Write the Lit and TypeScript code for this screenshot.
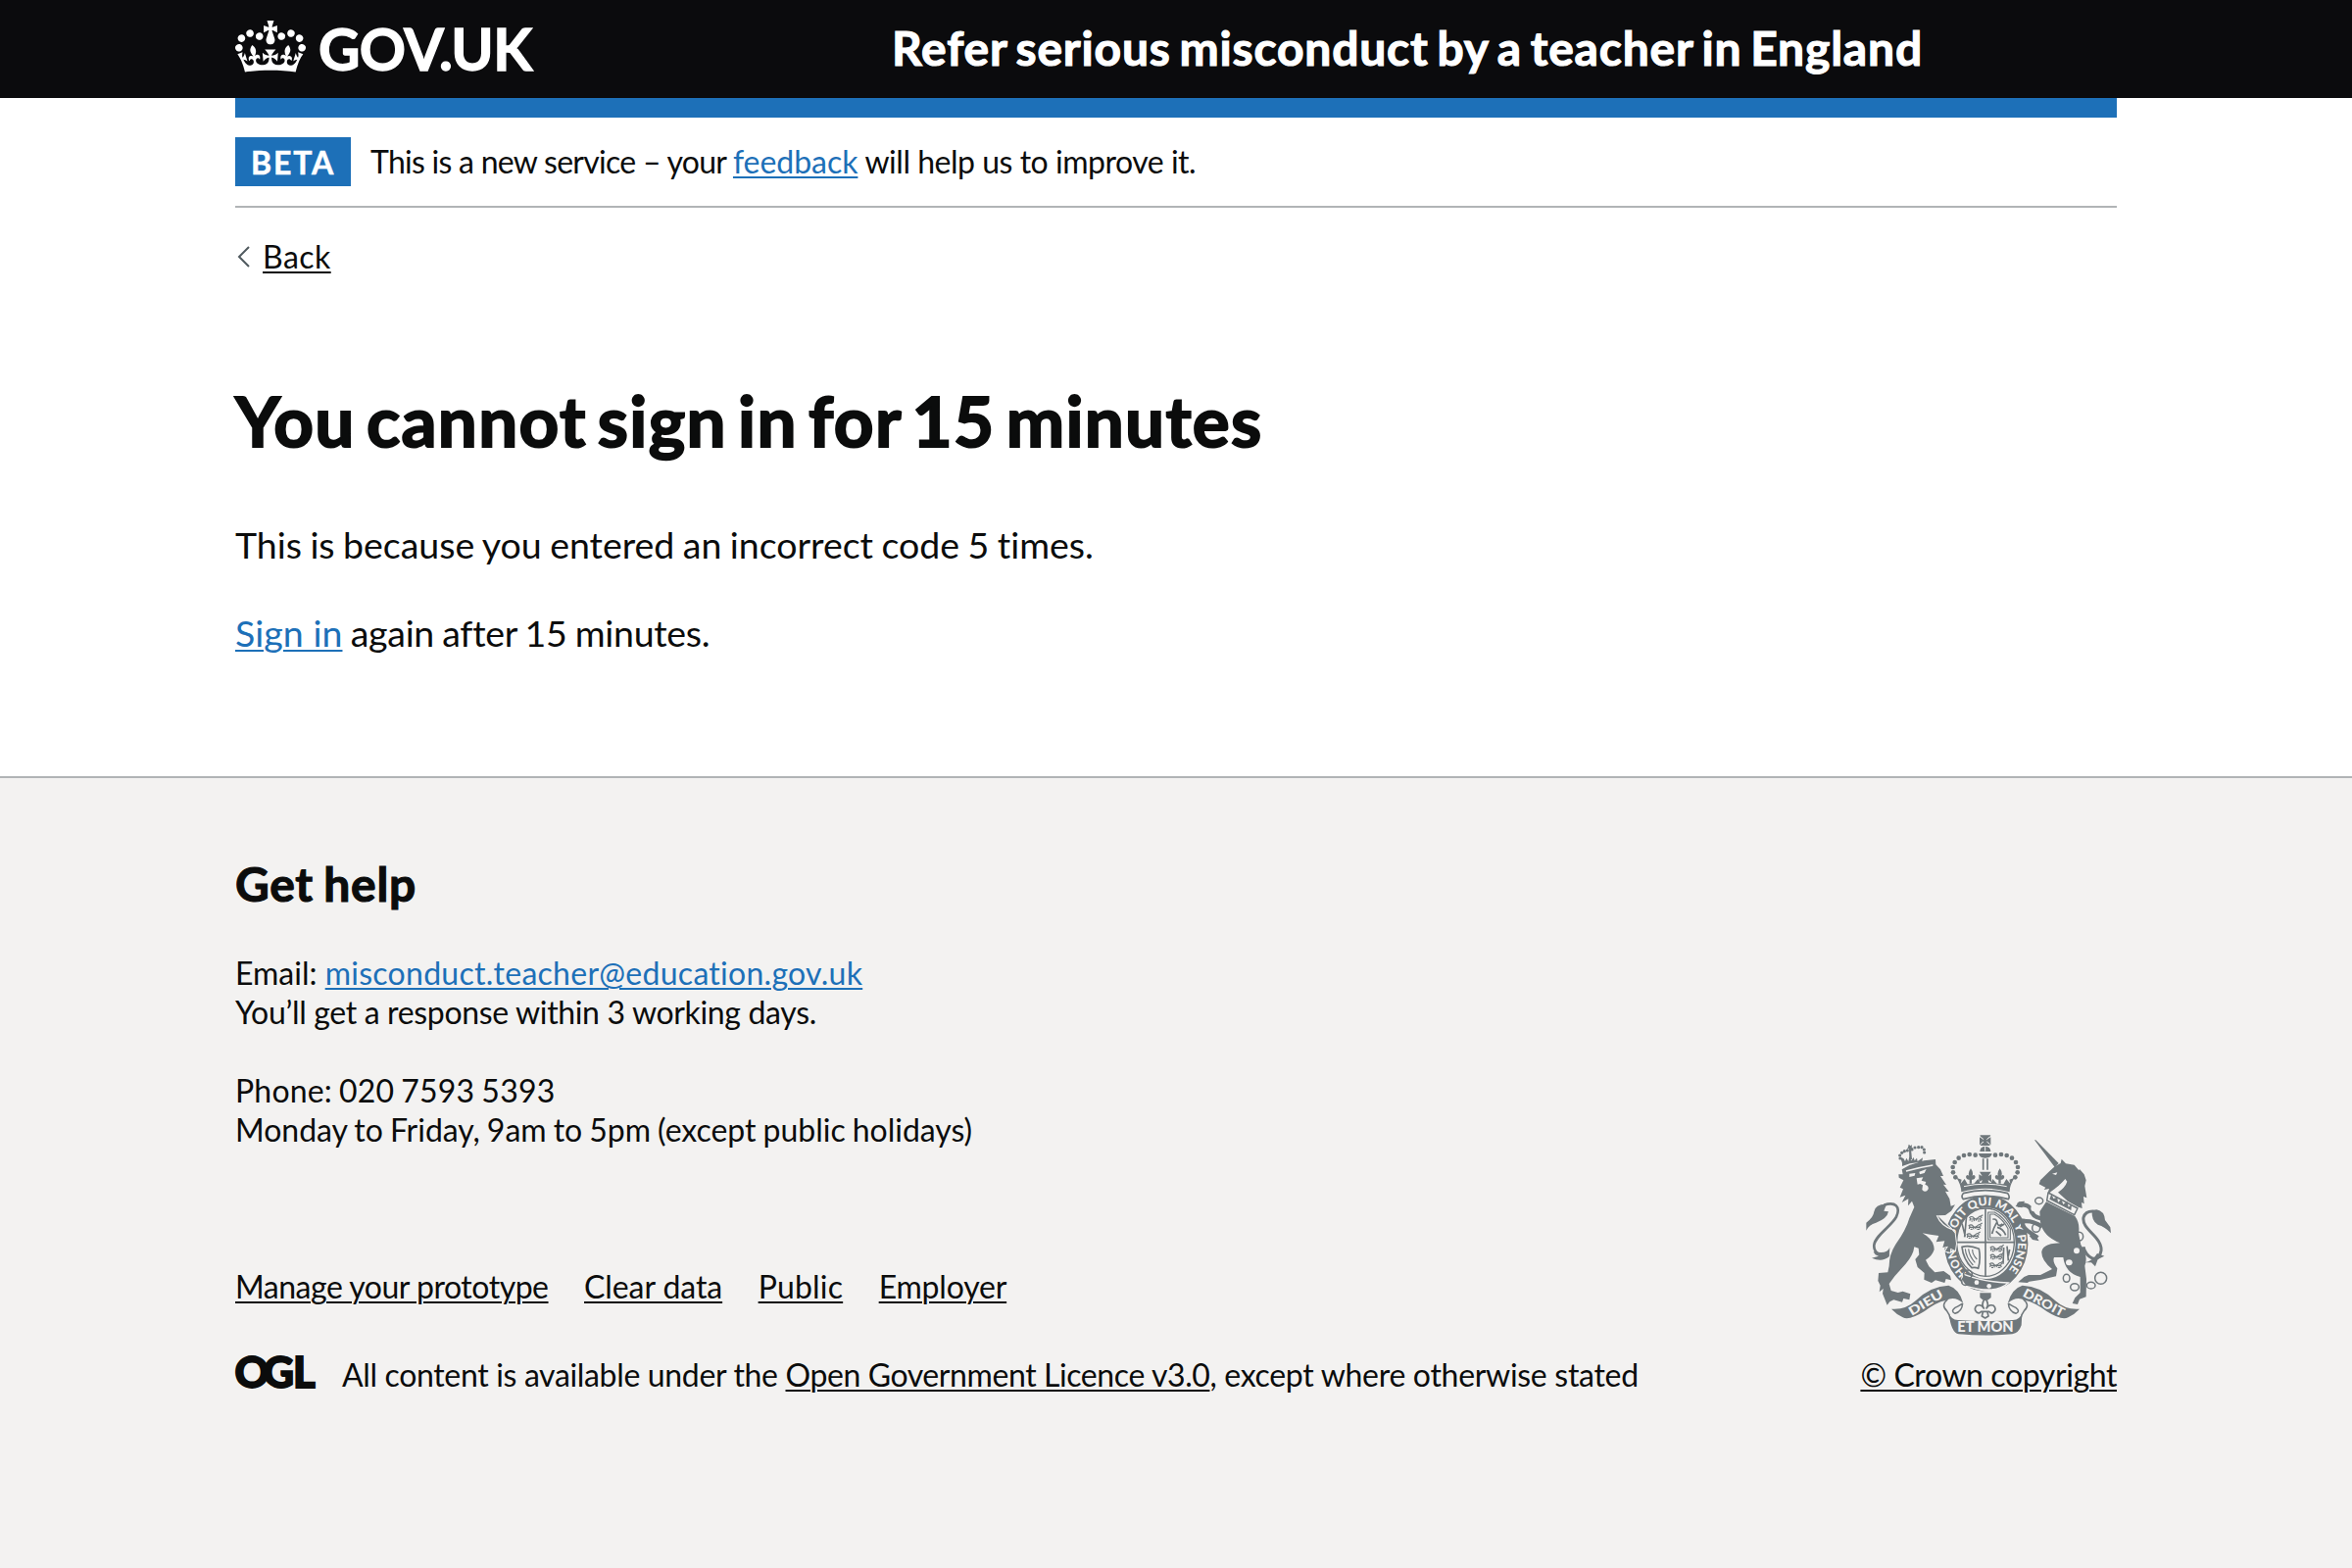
import { LitElement, html, css, svg } from 'lit';
import { customElement } from 'lit/decorators.js';

const crown = svg`<path d="M25 30.2c3.5 1.5 7.7-.2 9.1-3.7 1.5-3.6-.2-7.8-3.9-9.2-3.6-1.4-7.6.3-9.1 3.9-1.4 3.5.3 7.5 3.8 9zM9 39.5c3.6 1.5 7.8-.2 9.2-3.7 1.5-3.6-.2-7.8-3.9-9.1-3.6-1.5-7.6.2-9.1 3.8-1.4 3.5.3 7.5 3.8 9zM4.4 57.2c3.5 1.5 7.7-.2 9.1-3.8 1.5-3.6-.2-7.7-3.9-9.1-3.5-1.5-7.6.3-9.1 3.8-1.4 3.5.3 7.6 3.9 9.1zm38.3-21.4c3.5 1.5 7.7-.2 9.1-3.8 1.5-3.6-.2-7.7-3.9-9.1-3.6-1.5-7.6.3-9.1 3.8-1.3 3.6.4 7.7 3.9 9.1zm64.4-5.6c-3.6 1.5-7.8-.2-9.1-3.7-1.5-3.6.2-7.8 3.8-9.2 3.6-1.4 7.7.3 9.2 3.9 1.3 3.5-.4 7.5-3.9 9zm15.9 9.3c-3.6 1.5-7.7-.2-9.1-3.7-1.5-3.6.2-7.8 3.7-9.1 3.6-1.5 7.7.2 9.2 3.8 1.5 3.5-.3 7.5-3.8 9zm4.7 17.7c-3.6 1.5-7.8-.2-9.2-3.8-1.5-3.6.2-7.7 3.9-9.1 3.6-1.5 7.7.3 9.2 3.8 1.3 3.5-.4 7.6-3.9 9.1zM89.3 35.8c-3.6 1.5-7.8-.2-9.2-3.8-1.4-3.6.2-7.7 3.9-9.1 3.6-1.5 7.7.3 9.2 3.8 1.4 3.6-.3 7.7-3.9 9.1zM69.7 17.7l8.9 4.7V9.3l-8.9 2.8c-.2-.3-.5-.6-.9-.9L72.4 0H59.6l3.5 11.2c-.3.3-.6.5-.9.9l-8.8-2.8v13.1l8.8-4.7c.3.3.6.7.9.9l-5 15.4v.1c-.2.8-.4 1.6-.4 2.4 0 4.1 3.1 7.5 7 8.1h.2c.3 0 .7.1 1 .1.4 0 .7 0 1-.1h.2c4-.6 7.1-4.1 7.1-8.1 0-.8-.1-1.7-.4-2.4V34l-5.1-15.4c.4-.2.7-.6 1-.9zM66 92.8c16.9 0 32.8 1.1 47.1 3.2 4-16.9 8.9-26.7 14-33.5l-9.6-3.4c1 4.9 1.1 7.2 0 10.2-1.5-1.4-3-4.3-4.2-8.7L108.6 76c2.8-2 5-3.2 7.5-3.3-4.4 9.4-10 11.9-13.6 11.2-4.3-.8-6.3-4.6-5.6-7.9 1-4.7 5.7-5.9 8-.5 4.3-8.7-3-11.4-7.6-8.8 7.1-7.2 7.9-13.5 2.1-21.1-8 6.1-8.1 12.3-4.5 20.8-4.7-5.4-12.1-2.5-9.5 6.2 3.4-5.2 7.9-2 7.2 3.1-.6 4.3-6.4 7.8-13.5 7.2-10.3-.9-10.9-8-11.2-13.8 2.5-.5 7.1 1.8 11 7.3L80.2 60c-4.1 4.4-8 5.3-12.3 5.4 1.4-4.4 8-11.6 8-11.6H55.5s6.4 7.2 7.9 11.6c-4.2-.1-8-1-12.3-5.4l1.4 16.4c3.9-5.5 8.5-7.7 10.9-7.3-.3 5.8-.9 12.8-11.1 13.8-7.2.6-12.9-2.9-13.5-7.2-.7-5 3.8-8.3 7.1-3.1 2.7-8.7-4.6-11.6-9.4-6.2 3.7-8.5 3.6-14.7-4.6-20.8-5.8 7.6-5 13.9 2.2 21.1-4.7-2.6-11.9.1-7.7 8.8 2.3-5.5 7.1-4.2 8.1.5.7 3.3-1.3 7.1-5.7 7.9-3.5.7-9-1.8-13.5-11.2 2.5.1 4.7 1.3 7.5 3.3l-4.7-15.4c-1.2 4.4-2.7 7.2-4.3 8.7-1.1-3-.9-5.3 0-10.2l-9.5 3.4c5 6.9 9.9 16.7 14 33.5 14.8-2.1 30.8-3.2 47.7-3.2z"/>`;

const beads = [[407, 121], [389, 119], [372, 122], [356, 130], [344, 143], [338, 158], [339, 174], [346, 189]];

const lionPassant = (x: number, y: number) => svg`<path class="line3" d="M${x} ${y + 3}q8 -7 14 0t14 -1t10 2M${x + 4} ${y + 3}l-2 9M${x + 13} ${y + 4}l3 9M${x + 24} ${y + 3}l-3 9M${x + 33} ${y + 3}l4 9M${x + 36} ${y - 2}l6 -4M${x + 6} ${y + 13}h6M${x + 26} ${y + 13}h8M${x + 4} ${y + 7}h32"/>`;

const ribbonEnd = svg`
  <path d="M150 592Q192 596 225 566Q270 522 325 520Q358 530 370 575Q345 552 318 565Q285 572 250 600Q205 628 185 618Q165 608 150 592Z"/>
  <path class="line4" d="M368 575Q366 600 345 606Q330 600 345 588Q362 580 368 575M322 563Q300 580 320 598Q328 608 330 622"/>`;

const crest = svg`
  <g>
    <path d="M421 60h33l-6 10 6 -4v24l-6 -5 4 7h-30l4 -7 -6 5v-24l6 4z"/>
    <path class="cut3" d="M424 66l8 7M450 66l-8 7M424 86l8 -6M450 86l-8 -6"/>
    <path d="M421 110q0 -15 16 -16q17 1 17 16zM417 116h41q-2 14 -21 14q-18 0 -20 -14z"/>
    <path class="cut3" d="M437 95v14"/>
    <path class="line5" d="M431 132v34M444 132v34"/>
    ${beads.map(([x, y]) => svg`<circle cx=${x} cy=${y} r="7"/><circle cx=${875 - x} cy=${y} r="7"/>`)}
    <path d="M420 172h35l-9 14 10 -6v24l-10 -7 2 10h-22l2 -10 -10 7v-24l10 6z"/>
    <path d="M393 162q10 14 4 22q8 -6 10 4q-2 10 -11 8v12h-7v-12q-9 2 -11 -8q2 -10 10 -4q-5 -8 5 -22zM482 162q10 14 4 22q8 -6 10 4q-2 10 -11 8v12h-7v-12q-9 2 -11 -8q2 -10 10 -4q-5 -8 5 -22z"/>
    <path d="M349 190l16 6 -3 12 12 -14 9 16 20 -2 12 -14 6 12 17 -3 17 3 5 -12 13 14 20 2 9 -16 12 14 -3 -12 16 -6q-16 24 -15 44q-75 -22 -148 0q-1 -24 -15 -44z"/>
    <path class="cut3" d="M372 217q65 -15 131 0"/>
    <path class="line5" d="M370 238q67 -18 136 0q8 10 2 18q-70 -20 -138 0q-8 -8 0 -18z"/>
  </g>
  <g>
    <ellipse class="garter" cx="440" cy="391" rx="109" ry="128"/>
    <path id="garter-line" fill="none" d="M345 368A97 116 0 1 1 497 485"/>
    <path id="garter-start" fill="none" d="M380 482A97 116 0 0 1 346 418"/>
    <text class="motto" textLength="400" lengthAdjust="spacingAndGlyphs"><textPath href="#garter-line">SOIT QUI MAL Y PENSE</textPath></text>
    <text class="motto"><textPath href="#garter-start">HON</textPath></text>
    <ellipse class="field" cx="438" cy="388" rx="88" ry="104"/>
    <path class="line5" d="M438 284v208M350 388h176"/>
    <path class="line3" d="M446 296h20q30 16 48 50v34h-68zM452 302h13q26 14 42 44v28h-55z"/>
    <path class="line5" d="M460 318q12 -4 14 10t16 4M472 328q-10 18 -14 34M474 342q18 4 26 24M482 340l14 -8M470 354l16 14"/>
    ${lionPassant(388, 310)}${lionPassant(386, 335)}${lionPassant(380, 362)}
    <path class="line5" d="M366 330l10 40M380 306l-6 66"/>
    ${lionPassant(452, 402)}${lionPassant(452, 426)}${lionPassant(450, 452)}
    <path class="line5" d="M504 400l4 44M494 404l-2 50M512 410l-4 20"/>
    <path class="line5" d="M366 402q24 -6 52 6q6 30 -2 60q-8 -4 -20 -2q-26 -26 -30 -64z"/>
    <path class="line3" d="M376 408q2 26 24 50M386 408q2 22 20 42M398 410q0 16 14 30"/>
    <path class="strap" d="M366 494q70 52 146 24l-8 12q-62 22 -118 -8z"/>
    <path class="band" d="M372 486Q436 510 508 512Q470 548 378 522Q356 500 372 486Z"/>
    <circle class="cut" cx="411" cy="511" r="7"/><circle class="cut" cx="449" cy="522" r="7"/>
    <circle class="line5" cx="384" cy="486" r="13"/><circle class="line5" cx="376" cy="508" r="11"/>
  </g>
  <g transform="translate(45 30)">
    <path class="outlined" d="M127 150L140 150L137 135L160 122L205 108L240 104L241 120L255 135L264 155L255 155L273 182L264 181L281 203L270 202L283 225L287 247L300 243L288 262L270 275L246 276L285 314L299 330L303 362L300 383L286 376L285 388L270 385L279 370L262 374L268 354L242 357L250 338L224 334L200 330Q236 350 236 380Q230 400 210 412L220 432L238 450L265 446L285 460L288 474L272 470L268 482L240 474L228 482L205 472L206 452L185 434L178 410L190 396L188 376L175 372Q172 398 148 425L115 462L98 485L104 506L125 512L140 508L163 516L160 534L142 530L138 541L112 534L100 540L92 550L84 530L78 515L80 500L68 510L71 490L64 476L66 452L94 450L98 430Q98 396 118 364Q150 320 160 284L175 250L168 232L156 246L157 225L137 236L148 214L131 220L141 195L131 190L142 168L128 160Z"/>
    <path class="cut" d="M160 148l18 -2 -2 8 -16 4zM190 142l22 -8 -6 12 -14 4z"/>
    <path class="cut" d="M182 162l20 -3 -5 10 14 4 -3 8q12 4 10 14q-8 14 -19 2l2 -14 -8 -4 -8 2z"/>
    <path class="cutline" d="M244 276q14 32 46 42M150 140q44 -12 82 -18"/>
    <path d="M138 115l-6 -18 10 4 5 9 4 -10 6 10 3 -14 6 12 7 -10 3 10 7 -8 2 10 12 -8 4 -3 -3 16q-30 -4 -60 10z"/>
    ${[[132, 101], [131, 92], [137, 84], [145, 79], [154, 77], [168, 74], [177, 68], [188, 67], [198, 67], [205, 74], [206, 83]].map(([x, y]) => svg`<circle cx=${x} cy=${y} r="4.8"/>`)}
    <path d="M158 58l6 5 4 -4 -1 8 6 2 -8 3 3 32 -8 0 -1 -32 -7 1 4 -6z"/>
    <path class="line7" d="M98 396C70 404 50 388 52 366C56 336 106 308 120 280C134 250 118 232 82 244"/>
    <path d="M90 241Q56 240 52 264Q50 282 28 298L28 322Q36 304 58 298Q92 286 96 264L82 262Z"/>
    <path d="M100 374Q92 396 50 386Q54 398 66 400L45 406Q76 420 98 402Z"/>
  </g>
  <g transform="translate(420 30)">
    <path d="M168 45L172 45L242 116L230 128Z"/>
    <path d="M230 126L248 116L251 103L264 117L290 121L304 138L306 134L320 150L326 168L322 186L328 222L318 218L320 240L312 236L314 254L302 250L270 232L240 205Q262 190 268 172L262 164Q246 184 214 206L208 208L213 194L197 197L202 190L182 180L186 168L212 142Z"/>
    <path class="cut" d="M222 148l16 -4 -4 8z"/>
    <path class="line4" d="M210 206L206 230L290 274L300 254Z"/>
    <path d="M214 226l6 -16 6 14 12 -4 2 16 10 -10 6 16 12 -10 4 18 10 -8 -2 18z"/>
    <path d="M204 234L292 278Q308 300 303 330L310 366Q334 400 322 430L327 470L326 525L306 532L300 548L284 545L292 528L308 512L308 464Q262 452 256 404L228 404Q222 416 238 438L234 462Q190 474 152 478L146 482L118 480L136 464L150 458L186 458L222 440Q188 412 190 386Q194 362 246 360Q194 340 186 296L184 264Z"/>
    <path class="leg" d="M190 286Q160 280 156 256Q148 240 116 244M192 310Q160 290 134 294Q126 306 146 322L178 344"/>
    <path d="M110 248l10 -14 18 -2 -8 20zM152 338l14 -10 16 26 -20 -4zM116 284l24 2 -8 16 -12 -4z"/>
    <path class="line8" d="M318 372C324 404 364 428 372 384C376 340 312 320 318 282C324 262 342 262 356 264"/>
    <path d="M344 262L358 258Q382 262 384 290L400 312L402 330Q384 310 362 304Q342 292 344 262Z"/>
    <path d="M360 392l22 8 -20 10 -8 22 -12 -12 -20 0q24 -4 38 -28z"/>
    <g class="chain">
      <ellipse cx="182" cy="231" rx="12" ry="10"/><ellipse cx="173" cy="314" rx="12" ry="13"/><ellipse cx="305" cy="340" rx="12" ry="13"/>
      <ellipse cx="266" cy="468" rx="10" ry="12"/><ellipse cx="291" cy="495" rx="13" ry="11"/><ellipse cx="341" cy="490" rx="13" ry="10"/><circle cx="371" cy="468" r="18"/>
    </g>
    <ellipse class="cut" cx="297" cy="384" rx="9" ry="9"/><ellipse class="cut" cx="274" cy="420" rx="10" ry="9"/><ellipse class="cut" cx="164" cy="254" rx="7" ry="9"/>
  </g>
  <g>
    ${ribbonEnd}<g transform="translate(876 0) scale(-1 1)">${ribbonEnd}</g>
    <path d="M326 604Q332 624 354 626Q438 632 522 626Q544 624 550 604L548 642Q540 666 520 669Q440 676 356 669Q332 664 326 604Z"/>
    <text class="scroll" x="352" y="662" textLength="172" lengthAdjust="spacingAndGlyphs">ET MON</text>
    <text class="scroll small" transform="translate(212 614) rotate(-31)" textLength="116" lengthAdjust="spacingAndGlyphs">DIEU</text>
    <text class="scroll small" transform="translate(550 552) rotate(28)" textLength="138" lengthAdjust="spacingAndGlyphs">DROIT</text>
    <path d="M421 543h34v14l-10 8h-14l-10 -8z"/>
    <path class="line5" d="M437 560q-14 16 -4 30q-8 -14 -22 -8q-10 10 0 20q8 6 14 -2h24q6 8 14 2q10 -10 0 -20q-14 -6 -22 8q10 -14 -4 -30M430 602l-3 12 10 6 10 -6 -3 -12"/>
  </g>`;

@customElement('app-root')
export class AppRoot extends LitElement {
  static styles = css`
    :host { display: block; height: 1600px; overflow: hidden; background: #f3f2f1; color: #0b0c0c; font-family: Lato, "Liberation Sans", sans-serif; font-size: 32px; line-height: 40px; font-variant-ligatures: none; }
    .wrap { width: 1920px; margin: 0 auto; }
    header { background: #0b0b0d; color: #fff; height: 100px; }
    .head { display: grid; grid-template-columns: 670px 1fr; }
    .logo { display: flex; gap: 13px; height: 100px; }
    .logo svg { width: 72px; height: 53px; margin-top: 21px; fill: #fff; flex: none; }
    .logo span { font-size: 58.5px; line-height: 70px; font-weight: 700; padding-top: 14px; -webkit-text-stroke: 1.3px #fff; letter-spacing: -0.6px; }
    .service { font-size: 48px; line-height: 60px; font-weight: 700; padding-top: 19px; letter-spacing: 0.8px; word-spacing: -3.6px; -webkit-text-stroke: 1.1px currentColor; white-space: nowrap; }
    .main { background: #fff; height: 694px; box-sizing: border-box; border-bottom: 2px solid #b1b4b6; }
    .bar { height: 20px; background: #1d70b8; }
    .phase { display: flex; gap: 20px; padding: 20px 0; border-bottom: 2px solid #b1b4b6; }
    .tag { box-sizing: border-box; width: 118px; height: 50px; padding: 6px 0 0 16px; background: #1d70b8; color: #fff; font-weight: 700; letter-spacing: 1.9px; -webkit-text-stroke: 0.5px #fff; }
    .phase-text { padding-top: 5px; white-space: pre; }
    a { color: #1d70b8; text-decoration: underline; text-decoration-thickness: 2px; text-underline-offset: 3px; }
    .dark { color: #0b0c0c; }
    .back { display: flex; align-items: flex-start; padding-top: 30px; }
    .back svg { width: 13px; height: 22px; margin: 9px 13px 0 2px; fill: none; stroke: #505a5f; stroke-width: 2; }
    h1 { font-size: 71px; line-height: 100px; font-weight: 700; margin: 97px 0 0; letter-spacing: 1.3px; word-spacing: -7.3px; -webkit-text-stroke: 2px currentColor; }
    .body { font-size: 37.5px; line-height: 50px; margin: 52px 0 0; white-space: pre; }
    .body + .body { margin-top: 40px; }
    footer { padding-top: 78px; }
    h2 { font-size: 48px; line-height: 60px; font-weight: 700; margin: 0 0 41px; letter-spacing: 0.7px; word-spacing: -2px; -webkit-text-stroke: 1.1px currentColor; }
    address { font-style: normal; white-space: pre; margin-bottom: 40px; }
    .foot { display: flex; justify-content: space-between; align-items: flex-end; margin-top: -57px; }
    .links { display: flex; gap: 36.5px; margin-bottom: 50px; }
    .licence { display: flex; gap: 27px; white-space: pre; }
    .licence svg { width: 82px; height: 40px; overflow: visible; font-weight: 900; font-size: 43.5px; fill: #0b0c0c; stroke: #0b0c0c; stroke-width: 1.8; }
    .copy { display: flex; flex-direction: column; align-items: center; gap: 19px; }
    .copy svg { width: 260px; height: 208px; color: #6f777b; fill: currentColor; }
    .line3, .line4, .line5, .line7, .line8, .leg, .chain { fill: none; stroke: currentColor; stroke-width: 3.4; stroke-linejoin: round; }
    .line4 { stroke-width: 4.5; }
    .line5 { stroke-width: 5; }
    .line7 { stroke-width: 8; }
    .line8 { stroke-width: 9; }
    .leg { stroke-width: 13; }
    .chain { stroke-width: 4.5; }
    .cut { fill: #f3f2f1; }
    .cut3, .cutline { fill: none; stroke: #f3f2f1; stroke-width: 3; }
    .cutline { stroke-width: 4; }
    .outlined { stroke: #f3f2f1; stroke-width: 6; paint-order: stroke; }
    .garter { fill: none; stroke: currentColor; stroke-width: 38; }
    .field { fill: #f3f2f1; stroke: currentColor; stroke-width: 4; }
    .strap { fill: #f3f2f1; }
    .band { stroke: #f3f2f1; stroke-width: 4; }
    .motto { font-size: 35px; font-weight: 900; fill: #f3f2f1; }
    .scroll { font-size: 44px; font-weight: 900; fill: #f3f2f1; }
    .small { font-size: 38px; }
    .t1 { letter-spacing: -0.73px; }
    .t2 { letter-spacing: -0.04px; }
    .t3 { letter-spacing: -0.48px; }
    .t4 { letter-spacing: 0.45px; }
    .t5 { letter-spacing: -0.02px; word-spacing: -1.1px; }
    .t6 { letter-spacing: 0.05px; }
    .t7 { letter-spacing: -0.3px; word-spacing: -1px; }
    .t8 { letter-spacing: 0.27px; }
    .t8e { letter-spacing: 0; }
    .t9 { letter-spacing: -0.34px; }
    .t10 { letter-spacing: -0.02px; word-spacing: -1.1px; }
    .t11 { letter-spacing: -0.48px; }
    .t12 { letter-spacing: -0.08px; }
    .t13 { letter-spacing: 0.2px; }
    .t14 { letter-spacing: -0.2px; }
    .t15 { letter-spacing: -0.34px; }
    .t16 { letter-spacing: -0.41px; }
    .t17 { letter-spacing: -0.3px; }
    .t18 { letter-spacing: -0.4px; }
    .t19 { letter-spacing: 0.2px; word-spacing: -1.4px; }
  `;

  render() {
    return html`
      <header>
        <div class="wrap head">
          <div class="logo"><svg viewBox="0 0 132 97">${crown}</svg><span>GOV.UK</span></div>
          <div class="service">Refer serious misconduct by a teacher in England</div>
        </div>
      </header>
      <div class="main">
        <div class="wrap">
          <div class="bar"></div>
          <div class="phase">
            <div class="tag">BETA</div>
            <div class="phase-text"><span class="t1">This is a new service – your </span><a class="t2">feedback</a><span class="t3"> will help us to improve it.</span></div>
          </div>
          <div class="back"><svg viewBox="0 0 13 22"><path d="M12 1L2 11L12 21"/></svg><a class="dark t4">Back</a></div>
          <h1>You cannot sign in for 15 minutes</h1>
          <p class="body t5">This is because you entered an incorrect code 5 times.</p>
          <p class="body"><a class="t6">Sign in</a><span class="t7"> again after 15 minutes.</span></p>
        </div>
      </div>
      <footer>
        <div class="wrap">
          <h2>Get help</h2>
          <address><div><span class="t8e">Email: </span><a class="t8">misconduct.teacher@education.gov.uk</a></div><div class="t9">You’ll get a response within 3 working days.</div></address>
          <address><div class="t19">Phone: 020 7593 5393</div><div class="t10">Monday to Friday, 9am to 5pm (except public holidays)</div></address>
          <div class="foot">
            <div>
              <div class="links"><a class="dark t11">Manage your prototype</a><a class="dark t12">Clear data</a><a class="dark t13">Public</a><a class="dark t14">Employer</a></div>
              <div class="licence">
                <svg viewBox="0 0 82 40"><text y="33" x="-0.5 28.5 59">OGL</text></svg>
                <div><span class="t15">All content is available under the </span><a class="dark t16">Open Government Licence v3.0</a><span class="t17">, except where otherwise stated</span></div>
              </div>
            </div>
            <div class="copy"><svg viewBox="57 53 780 624">${crest}</svg><a class="dark t18">© Crown copyright</a></div>
          </div>
        </div>
      </footer>`;
  }
}
